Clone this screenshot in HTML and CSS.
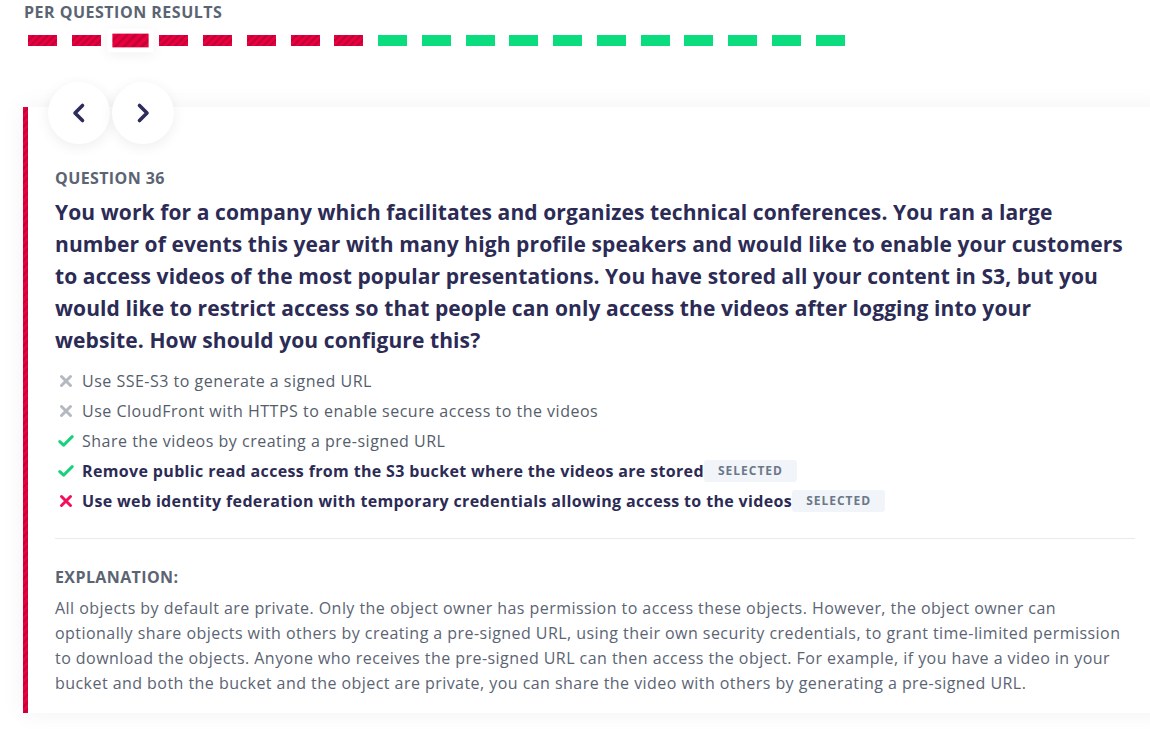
FILE: index.html
```html
<!DOCTYPE html>
<html lang="en">
<head>
<meta charset="utf-8">
<title>Per question results</title>
<link rel="stylesheet" href="styles.css">
</head>
<body>
<div class="page">
  <section class="results">
    <h2 class="results-title">PER QUESTION RESULTS</h2>
    <div class="bars">
      <span class="seg wrong"></span>
      <span class="seg wrong"></span>
      <span class="seg wrong current"></span>
      <span class="seg wrong"></span>
      <span class="seg wrong"></span>
      <span class="seg wrong"></span>
      <span class="seg wrong"></span>
      <span class="seg wrong"></span>
      <span class="seg right"></span>
      <span class="seg right"></span>
      <span class="seg right"></span>
      <span class="seg right"></span>
      <span class="seg right"></span>
      <span class="seg right"></span>
      <span class="seg right"></span>
      <span class="seg right"></span>
      <span class="seg right"></span>
      <span class="seg right"></span>
      <span class="seg right"></span>
    </div>
  </section>

  <article class="card">
    <div class="nav">
      <button class="nav-btn" aria-label="Previous">
        <svg width="20" height="24" viewBox="0 0 20 24"><path d="M13.5 4.5 L6 12 L13.5 19.5" fill="none" stroke="#2e2c5c" stroke-width="3.6" stroke-linecap="round" stroke-linejoin="round"/></svg>
      </button>
      <button class="nav-btn" aria-label="Next">
        <svg width="20" height="24" viewBox="0 0 20 24"><path d="M6.5 4.5 L14 12 L6.5 19.5" fill="none" stroke="#2e2c5c" stroke-width="3.6" stroke-linecap="round" stroke-linejoin="round"/></svg>
      </button>
    </div>

    <div class="q-label">QUESTION 36</div>
    <h1 class="q-text">You work for a company which facilitates and organizes technical conferences. You ran a large number of events this year with many high profile speakers and would like to enable your customers to access videos of the most popular presentations. You have stored all your content in S3, but you would like to restrict access so that people can only access the videos after logging into your website. How should you configure this?</h1>

    <ul class="options">
      <li class="opt">
        <svg class="ico" width="16" height="16" viewBox="0 0 16 16"><path d="M3.5 3.5 L12.5 12.5 M12.5 3.5 L3.5 12.5" stroke="#b4b9c1" stroke-width="3" stroke-linecap="round"/></svg>
        <span>Use SSE-S3 to generate a signed URL</span>
      </li>
      <li class="opt">
        <svg class="ico" width="16" height="16" viewBox="0 0 16 16"><path d="M3.5 3.5 L12.5 12.5 M12.5 3.5 L3.5 12.5" stroke="#b4b9c1" stroke-width="3" stroke-linecap="round"/></svg>
        <span>Use CloudFront with HTTPS to enable secure access to the videos</span>
      </li>
      <li class="opt">
        <svg class="ico" width="16" height="16" viewBox="0 0 16 16"><path d="M1.8 8.6 L5.6 12.2 L14.2 3.6" fill="none" stroke="#17d27a" stroke-width="3" stroke-linecap="round" stroke-linejoin="round"/></svg>
        <span>Share the videos by creating a pre-signed URL</span>
      </li>
      <li class="opt chosen">
        <svg class="ico" width="16" height="16" viewBox="0 0 16 16"><path d="M1.8 8.6 L5.6 12.2 L14.2 3.6" fill="none" stroke="#17d27a" stroke-width="3" stroke-linecap="round" stroke-linejoin="round"/></svg>
        <span>Remove public read access from the S3 bucket where the videos are stored</span>
        <span class="badge">SELECTED</span>
      </li>
      <li class="opt chosen">
        <svg class="ico" width="16" height="16" viewBox="0 0 16 16"><path d="M3.5 3.5 L12.5 12.5 M12.5 3.5 L3.5 12.5" stroke="#f0115a" stroke-width="3" stroke-linecap="round"/></svg>
        <span>Use web identity federation with temporary credentials allowing access to the videos</span>
        <span class="badge">SELECTED</span>
      </li>
    </ul>

    <hr class="divider">

    <h3 class="exp-title">EXPLANATION:</h3>
    <p class="exp-text">All objects by default are private. Only the object owner has permission to access these objects. However, the object owner can optionally share objects with others by creating a pre-signed URL, using their own security credentials, to grant time-limited permission to download the objects. Anyone who receives the pre-signed URL can then access the object. For example, if you have a video in your bucket and both the bucket and the object are private, you can share the video with others by generating a pre-signed URL.</p>
  </article>
</div>
</body>
</html>
```

FILE: styles.css
```css
* { box-sizing: border-box; }

html, body {
  margin: 0;
  padding: 0;
  background: #ffffff;
}

body {
  font-family: "Open Sans", "Noto Sans", sans-serif;
  color: #5b6473;
  overflow: hidden;
}

.page {
  padding: 0 0 16px 23px;
}

/* Results header */
.results {
  padding-left: 1px;
}

.results-title {
  margin: 0;
  padding-top: 1px;
  font-size: 16px;
  line-height: 22px;
  font-weight: 700;
  letter-spacing: 0.5px;
  color: #5b6473;
}

.bars {
  display: flex;
  gap: 14.78px;
  margin-top: 12px;
  padding-left: 4px;
}

.seg {
  flex: 0 0 29px;
  height: 11px;
}

.seg.wrong {
  background: repeating-linear-gradient(135deg, #e8003e 0 3px, #c50037 3px 5px);
}

.seg.right {
  background: #0bdd7f;
}

.seg.current {
  transform: scale(1.25);
  box-shadow: 0 0 0 4px #ffffff, 0 2px 10px 4px rgba(0, 0, 0, 0.06);
}

/* Card */
.card {
  display: flow-root;
  margin-top: 61px;
  margin-right: -20px;
  padding: 0 15px 17px 32px;
  background: repeating-linear-gradient(135deg, #e8003e 0 3px, #c50037 3px 5px) left top / 5px 100% no-repeat, #ffffff;
  box-shadow: 0 0 24px rgba(0, 0, 0, 0.055);
}

.nav {
  display: flex;
  gap: 2px;
  margin: -25px 0 0 -7px;
}

.nav-btn {
  width: 62px;
  height: 62px;
  border: 0;
  border-radius: 50%;
  background: #ffffff;
  box-shadow: 0 3px 14px rgba(0, 0, 0, 0.07);
  display: flex;
  align-items: center;
  justify-content: center;
  padding: 0;
  cursor: pointer;
}

.q-label {
  margin-top: 23px;
  font-size: 16px;
  line-height: 22px;
  font-weight: 700;
  letter-spacing: 0.4px;
  color: #5b6473;
}

.q-text {
  margin: 7px 0 0;
  font-size: 21px;
  line-height: 32px;
  font-weight: 700;
  letter-spacing: 0.1px;
  color: #2c2b55;
  max-width: 1069.5px;
}

.options {
  list-style: none;
  margin: 10px 0 0;
  padding: 0;
}

.opt {
  display: flex;
  align-items: center;
  height: 30px;
  font-size: 16px;
  letter-spacing: 0.5px;
  color: #555d6b;
}

.opt .ico {
  flex: 0 0 16px;
  margin: 0 8px 0 3px;
}

.opt.chosen {
  font-weight: 700;
  letter-spacing: 0.35px;
  color: #2c2b55;
}

.badge {
  margin-left: 0;
  padding: 0 14px;
  height: 22px;
  line-height: 22px;
  border-radius: 3px;
  background: #f1f4f8;
  color: #6c7888;
  font-size: 12px;
  font-weight: 700;
  letter-spacing: 1px;
}

.divider {
  margin: 22px 0 0;
  border: 0;
  border-top: 1px solid #e9eaee;
  max-width: 1080px;
}

.exp-title {
  margin: 27px 0 0;
  font-size: 16px;
  line-height: 22px;
  font-weight: 700;
  letter-spacing: 0.4px;
  color: #5b6473;
}

.exp-text {
  margin: 8px 0 0;
  font-size: 16px;
  line-height: 25px;
  letter-spacing: 0.45px;
  color: #5b6473;
  max-width: 1078px;
}
```
